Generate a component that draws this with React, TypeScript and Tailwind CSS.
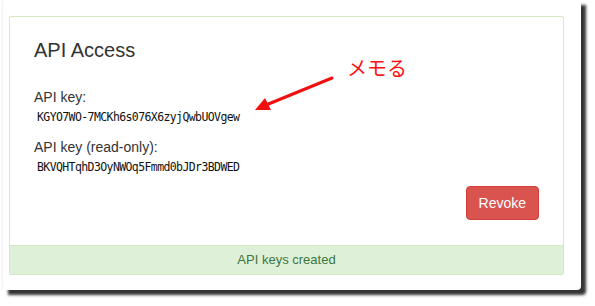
export default function App() {
  const keys = [
    { label: "API key:", value: "KGYO7WO-7MCKh6s076X6zyjQwbUOVgew" },
    { label: "API key (read-only):", value: "BKVQHTqhD3OyNWOq5Fmmd0bJDr3BDWED" },
  ]

  return (
    <div className="relative w-[595px] h-[306px] bg-white pl-[3px] font-['Liberation_Sans',Arial,sans-serif] text-[#333]">
      {/* paper with torn-edge style shadow */}
      <div className="w-[578px] h-[290px] bg-white pl-[6px] pt-[16px] rounded-br-[4px] shadow-[5px_5px_3px_rgba(0,0,0,0.8),-1px_-1px_2px_rgba(0,0,0,0.08)]">
        <div className="w-[555px] border border-[#d6e9c6] rounded-[2px] bg-white">
          <div className="h-[228px] pt-[22px] pl-[24px] pr-[24px] flex flex-col">
            <h3 className="text-[20px] leading-[22px] font-normal">API Access</h3>
            <div className="mt-[26px] flex flex-col">
              {keys.map((k, i) => (
                <div key={i} className={i > 0 ? "mt-[12px]" : ""}>
                  <div className="text-[14px] leading-[20px]">{k.label}</div>
                  <div className="mt-[2px] pl-[3px] text-[11.5px] leading-[16px] tracking-[-0.6px] text-[#111] font-['DejaVu_Sans_Mono',monospace]">
                    {k.value}
                  </div>
                </div>
              ))}
            </div>
            <div className="mt-[11px] flex justify-end">
              <button className="h-[34px] px-[12px] text-[14px] leading-[20px] text-white bg-[#d9534f] border border-[#d43f3a] rounded-[4px]">
                Revoke
              </button>
            </div>
          </div>
          <div className="h-[29px] bg-[#dff0d8] border-t border-[#d6e9c6] text-[#3c763d] text-[13px] leading-[28px] text-center">
            API keys created
          </div>
        </div>
      </div>

      {/* red annotation */}
      <span className="absolute left-[347px] top-[56px] text-[20px] leading-[24px] text-[#ff1010] font-['Noto_Sans_CJK_JP',sans-serif]">
        メモる
      </span>
      <svg className="absolute left-0 top-0 pointer-events-none" width="595" height="306">
        <line x1="332" y1="78" x2="266" y2="105" stroke="#f01010" strokeWidth="3" strokeLinecap="round" />
        <polygon points="255,110 265,98 271,110" fill="#f01010" />
      </svg>
    </div>
  )
}
